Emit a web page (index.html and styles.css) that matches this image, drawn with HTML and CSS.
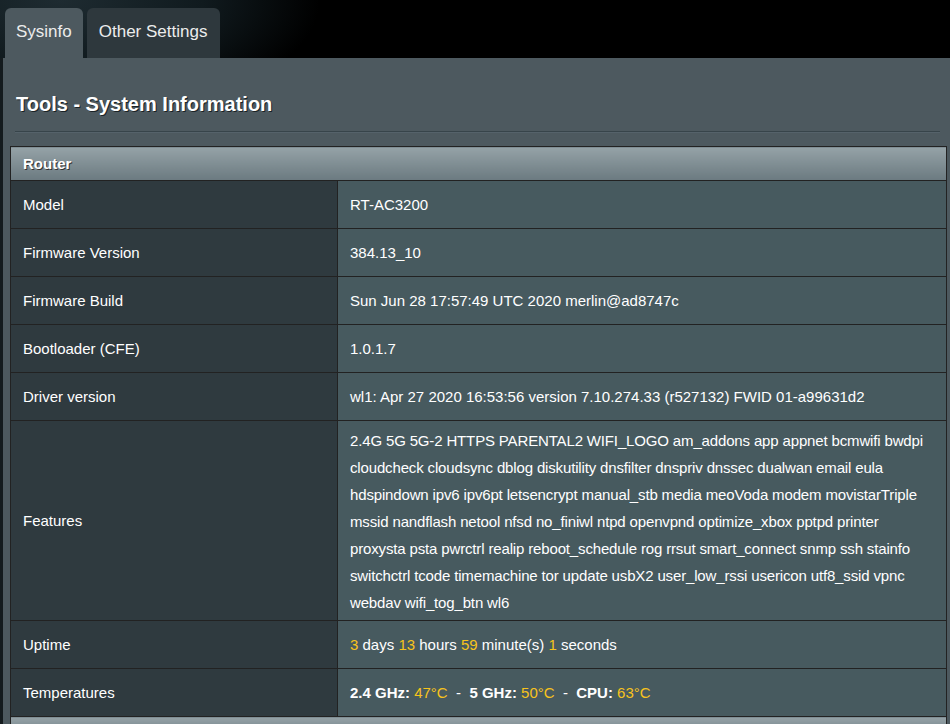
FILE: index.html
```html
<!DOCTYPE html>
<html>
<head>
<meta charset="utf-8">
<link rel="stylesheet" href="styles.css">
</head>
<body>
<div class="tabs">
  <div class="tab tab-active">Sysinfo</div>
  <div class="tab tab-wide">Other Settings</div>
</div>
<div class="panel">
  <h1 class="title">Tools - System Information</h1>
  <div class="rule"></div>
  <table class="info">
    <colgroup><col class="col-label"><col class="col-value"></colgroup>
    <thead>
      <tr><th colspan="2" class="section">Router</th></tr>
    </thead>
    <tbody>
      <tr><td class="label">Model</td><td class="value">RT-AC3200</td></tr>
      <tr><td class="label">Firmware Version</td><td class="value">384.13_10</td></tr>
      <tr><td class="label">Firmware Build</td><td class="value">Sun Jun 28 17:57:49 UTC 2020 merlin@ad8747c</td></tr>
      <tr><td class="label">Bootloader (CFE)</td><td class="value">1.0.1.7</td></tr>
      <tr><td class="label">Driver version</td><td class="value">wl1: Apr 27 2020 16:53:56 version 7.10.274.33 (r527132) FWID 01-a99631d2</td></tr>
      <tr><td class="label">Features</td><td class="value features">2.4G 5G 5G-2 HTTPS PARENTAL2 WIFI_LOGO am_addons app appnet bcmwifi bwdpi cloudcheck cloudsync dblog diskutility dnsfilter dnspriv dnssec dualwan email eula hdspindown ipv6 ipv6pt letsencrypt manual_stb media meoVoda modem movistarTriple mssid nandflash netool nfsd no_finiwl ntpd openvpnd optimize_xbox pptpd printer proxysta psta pwrctrl realip reboot_schedule rog rrsut smart_connect snmp ssh stainfo switchctrl tcode timemachine tor update usbX2 user_low_rssi usericon utf8_ssid vpnc webdav wifi_tog_btn wl6</td></tr>
      <tr><td class="label">Uptime</td><td class="value"><span class="hl">3</span> days <span class="hl">13</span> hours <span class="hl">59</span> minute(s) <span class="hl">1</span> seconds</td></tr>
      <tr><td class="label">Temperatures</td><td class="value"><b>2.4 GHz:</b> <span class="hl">47°C</span> &nbsp;-&nbsp; <b>5 GHz:</b> <span class="hl">50°C</span> &nbsp;-&nbsp; <b>CPU:</b> <span class="hl">63°C</span></td></tr>
    </tbody>
    <tbody>
      <tr><th colspan="2" class="section next">&nbsp;</th></tr>
    </tbody>
  </table>
</div>
</body>
</html>
```

FILE: styles.css
```css
html, body {
  margin: 0;
  padding: 0;
  height: 100%;
  overflow: hidden;
}
body {
  background:
    radial-gradient(ellipse 260px 120px at 60px 0px, #1e2b31 0%, #101a1e 55%, rgba(0,0,0,0) 100%),
    #000;
  font-family: "Liberation Sans", Arial, sans-serif;
  color: #fff;
}
.tabs {
  display: flex;
  gap: 4px;
  padding: 8px 0 0 5px;
  height: 50px;
}
.tab {
  height: 50px;
  line-height: 48px;
  padding: 0 11px;
  font-size: 17px;
  color: #ececec;
  background: #2e383d;
  border-radius: 6px 6px 0 0;
}
.tab-wide {
  padding: 0 13px 0 12px;
}
.tab-active {
  background: #4d595f;
}
.panel {
  margin-left: 3px;
  background: #4d595f;
  padding: 34px 3px 0 7px;
  min-height: 700px;
  box-shadow: -3px 0 0 #141b1e;
}
.title {
  margin: 0 0 0 6px;
  font-size: 20px;
  line-height: 24px;
  font-weight: bold;
  color: #fff;
  text-shadow: 1px 1px 0 #1a2226;
}
.rule {
  margin: 15px 7px 13px 5px;
  height: 1px;
  background: #37444a;
  border-bottom: 1px solid #55626a;
}
.info {
  width: 937px;
  table-layout: fixed;
  border-collapse: collapse;
  border: 1px solid #222;
  font-size: 15px;
}
.col-label {
  width: 327px;
}
.info th, .info td {
  border: 1px solid #222;
  text-align: left;
}
.section {
  height: 33px;
  padding: 0 0 0 12px;
  background: linear-gradient(#95a2a7, #6b7a80);
  font-weight: bold;
  font-size: 15px;
  color: #fff;
  text-shadow: 1px 1px 0 #333;
}
.next {
  height: 20px;
}
.label {
  height: 47px;
  padding: 0 12px;
  background: #2f3a3f;
  color: #fff;
}
.value {
  padding: 0 12px;
  background: #475a5f;
  color: #fff;
}
.features {
  padding: 6px 12px 4px 12px;
  line-height: 27px;
  letter-spacing: -0.15px;
}
.hl {
  color: #f7c31c;
}
.value b {
  font-weight: bold;
}
```
